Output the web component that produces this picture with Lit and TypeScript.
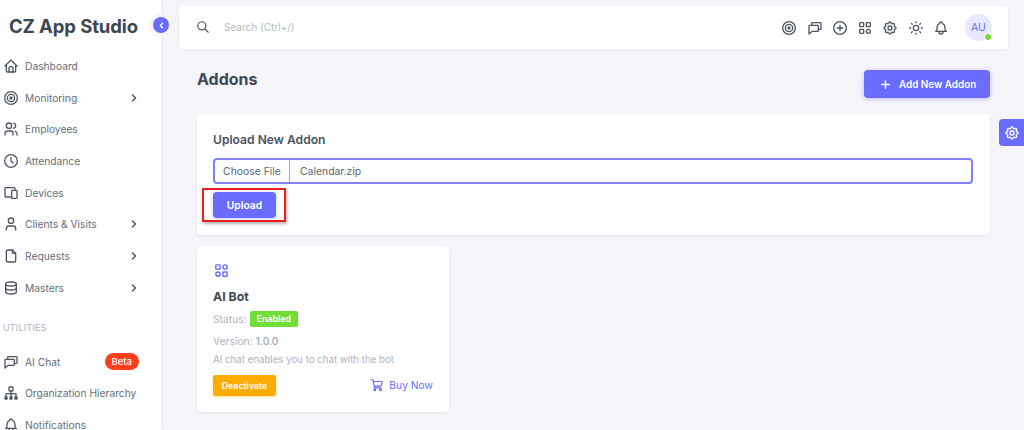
import { LitElement, html, css, svg } from "lit";
import { customElement } from "lit/decorators.js";

const ic = (body: unknown, size = 16, sw = 2) => html`<svg width=${size} height=${size} viewBox="0 0 24 24" fill="none" stroke="currentColor" stroke-width=${sw} stroke-linecap="round" stroke-linejoin="round">${body}</svg>`;

const I = {
  home: svg`<path d="M5 12H3l9-9 9 9h-2"/><path d="M5 12v7a2 2 0 0 0 2 2h10a2 2 0 0 0 2-2v-7"/><path d="M9 21v-6a2 2 0 0 1 2-2h2a2 2 0 0 1 2 2v6"/>`,
  target: svg`<circle cx="12" cy="12" r="1.5"/><circle cx="12" cy="12" r="5.500"/><circle cx="12" cy="12" r="9.500"/>`,
  users: svg`<circle cx="9" cy="7" r="4"/><path d="M3 21v-2a4 4 0 0 1 4-4h4a4 4 0 0 1 4 4v2"/><path d="M16 3.100a4 4 0 0 1 0 7.800"/><path d="M21 21v-2a4 4 0 0 0-3-3.900"/>`,
  clock: svg`<circle cx="12" cy="12" r="9.500"/><path d="M12 7v5l3 3"/>`,
  devices: svg`<path d="M13 9a1 1 0 0 1 1-1h6a1 1 0 0 1 1 1v10a1 1 0 0 1-1 1h-6a1 1 0 0 1-1-1z"/><path d="M18 8V5a1 1 0 0 0-1-1H4a1 1 0 0 0-1 1v12a1 1 0 0 0 1 1h9"/>`,
  user: svg`<circle cx="12" cy="7" r="4"/><path d="M5 21v-2a4 4 0 0 1 4-4h6a4 4 0 0 1 4 4v2"/>`,
  file: svg`<path d="M14 3v4a1 1 0 0 0 1 1h4"/><path d="M17 21H7a2 2 0 0 1-2-2V5a2 2 0 0 1 2-2h7l5 5v11a2 2 0 0 1-2 2z"/>`,
  db: svg`<ellipse cx="12" cy="6" rx="8" ry="3"/><path d="M4 6v6c0 1.700 3.600 3 8 3s8-1.300 8-3V6"/><path d="M4 12v6c0 1.700 3.600 3 8 3s8-1.300 8-3v-6"/>`,
  chat: svg`<path d="M7 7V5a1 1 0 0 1 1-1h12a1 1 0 0 1 1 1v8a1 1 0 0 1-1 1h-2"/><path d="M3 9a1 1 0 0 1 1-1h12a1 1 0 0 1 1 1v7a1 1 0 0 1-1 1H8l-5 4z"/>`,
  org: svg`<rect x="9" y="3" width="6" height="6" rx="1"/><path d="M12 9v8M4.500 17v-3a1 1 0 0 1 1-1h13a1 1 0 0 1 1 1v3"/><path d="M3 18h3v3H3zM10.500 18h3v3h-3zM18 18h3v3h-3z" fill="currentColor"/>`,
  bell: svg`<path d="M10 5a2 2 0 1 1 4 0 7 7 0 0 1 4 6v3a4 4 0 0 0 2 3H4a4 4 0 0 0 2-3v-3a7 7 0 0 1 4-6"/><path d="M9 17v1a3 3 0 0 0 6 0v-1"/>`,
  chev: svg`<path d="M9 6l6 6-6 6"/>`,
  search: svg`<circle cx="10" cy="10" r="7"/><path d="M21 21l-6-6"/>`,
  plusc: svg`<circle cx="12" cy="12" r="9.500"/><path d="M8 12h8M12 8v8"/>`,
  apps: svg`<rect x="4" y="4" width="6" height="6" rx="1"/><rect x="14" y="4" width="6" height="6" rx="1"/><rect x="4" y="14" width="6" height="6" rx="1"/><circle cx="17" cy="17" r="3"/>`,
  apps2: svg`<rect x="4" y="4" width="6" height="6" rx="1"/><circle cx="17" cy="7" r="3"/><circle cx="7" cy="17" r="3"/><rect x="14" y="14" width="6" height="6" rx="1"/>`,
  gear: svg`<path d="M10.325 4.317c.426-1.756 2.924-1.756 3.350 0a1.724 1.724 0 0 0 2.573 1.066c1.543-.94 3.310.826 2.370 2.370a1.724 1.724 0 0 0 1.065 2.572c1.756.426 1.756 2.924 0 3.350a1.724 1.724 0 0 0-1.066 2.573c.94 1.543-.826 3.310-2.370 2.370a1.724 1.724 0 0 0-2.572 1.065c-.426 1.756-2.924 1.756-3.350 0a1.724 1.724 0 0 0-2.573-1.066c-1.543.94-3.310-.826-2.370-2.370a1.724 1.724 0 0 0-1.065-2.572c-1.756-.426-1.756-2.924 0-3.350a1.724 1.724 0 0 0 1.066-2.573c-.94-1.543.826-3.310 2.370-2.370 1 .608 2.296.07 2.572-1.065z"/><circle cx="12" cy="12" r="3"/>`,
  sun: svg`<circle cx="12" cy="12" r="4"/><path d="M2.500 12h1.500M20 12h1.500M12 2.500V4M12 20v1.500M5.300 5.300l1 1M17.700 17.700l1 1M5.300 18.700l1-1M17.700 6.300l1-1"/>`,
  plus: svg`<path d="M12 5v14M5 12h14"/>`,
  cart: svg`<circle cx="8" cy="20" r="1.700"/><circle cx="18" cy="20" r="1.700"/><path d="M2 3h3l3 14h10"/><path d="M5.500 6H21l-2 8H7.200"/>`,
};

const nav = [
  ["Dashboard", I.home, false],
  ["Monitoring", I.target, true],
  ["Employees", I.users, false],
  ["Attendance", I.clock, false],
  ["Devices", I.devices, false],
  ["Clients & Visits", I.user, true],
  ["Requests", I.file, true],
  ["Masters", I.db, true],
] as const;

@customElement("app-root")
export class AppRoot extends LitElement {
  static styles = css`
    :host { display: block; width: 1024px; height: 430px; overflow: hidden; position: relative;
      font-family: Inter, "Open Sans", sans-serif; background: #f4f4f9; color: #5d6571; }
    .page { display: flex; height: 430px; }
    .side { width: 161px; flex: none; background: #fff; box-shadow: 0 0 4px rgba(70,70,100,.08); overflow: hidden; }
    .logo { height: 50px; box-sizing: border-box; padding: 1px 0 0 9px; display: flex; align-items: center; font-size: 18.500px; font-weight: 700; color: #3d4653; letter-spacing: -.1px; white-space: nowrap; }
    .items { display: flex; flex-direction: column; }
    .item { height: 31.700px; flex: none; display: flex; align-items: center; padding: 0 21px 0 3px; font-size: 10.250px; color: #656d78; gap: 6px; white-space: nowrap; }
    .item .ico { width: 16px; display: flex; justify-content: center; color: #4f5763; }
    .item .lbl { flex: 1; }
    .chev { display: flex; color: #4f5763; }
    .section { font-size: 8.800px; color: #aeb2b9; letter-spacing: .3px; padding: 18.400px 0 12px 3px; line-height: 12px; }
    .beta { background: #ff3e1d; color: #fff; font-size: 9.500px; font-weight: 500; border-radius: 9px; padding: 2px 7px; line-height: 13px; margin-right: 1px; }
    .toggle { position: absolute; left: 153px; top: 17px; width: 16px; height: 16px; border-radius: 50%; background: #696cff; color: #fff; display: flex; align-items: center; justify-content: center; box-shadow: 0 0 0 4px #f4f4f9; }
    .main { flex: 1; min-width: 0; padding: 6px 0 0 18px; }
    .navbar { width: 829px; height: 43px; box-sizing: border-box; background: #fff; border-radius: 4px; box-shadow: 0 1px 3px rgba(70,70,100,.08); display: flex; align-items: center; padding: 0 16px 0 17px; }
    .search-i { display: flex; color: #4f5763; margin-top: -2px; }
    .search-t { margin-left: 14px; font-size: 10px; color: #b4b8bf; flex: 1; margin-top: -2px; }
    .tools { display: flex; align-items: center; gap: 9.300px; color: #4f5763; margin-right: 1px; }
    .tools span { display: flex; }
    .avatar { margin-left: 15px; width: 27px; height: 27px; border-radius: 50%; background: #e7e7ff; color: #696cff; font-size: 10.500px; font-weight: 400; display: flex; align-items: center; justify-content: center; position: relative; }
    .dot { position: absolute; right: 1px; bottom: 1px; width: 6px; height: 6px; border-radius: 50%; background: #71dd37; box-shadow: 0 0 0 1px #fff; }
    .content { padding: 0 0 0 18px; width: 793px; }
    .head { display: flex; justify-content: space-between; align-items: center; margin-top: 21px; height: 28px; }
    h1 { margin: -11px 0 0; font-size: 16px; font-weight: 700; color: #3f4855; }
    .btn { background: #696cff; color: #fff; border-radius: 4px; font-weight: 600; box-shadow: 0 1px 4px rgba(105,108,255,.4); display: flex; align-items: center; }
    .add { height: 28px; width: 126px; font-size: 9.900px; padding: 0 0 0 15px; gap: 7px; box-sizing: border-box; }
    .card { background: #fff; border-radius: 4px; box-shadow: 0 1px 3px rgba(70,70,100,.08); }
    .upload { margin-top: 16px; height: 121px; box-sizing: border-box; padding: 18px 17px 0 16px; }
    h2 { margin: 0; font-size: 12.100px; font-weight: 600; color: #4a525e; line-height: 16px; }
    .file { margin-top: 10px; height: 26px; box-sizing: border-box; border: 2px solid #7f82ff; border-radius: 4px; display: flex; align-items: center; font-size: 10.400px; color: #5d6571; }
    .choose { width: 75px; height: 100%; display: flex; align-items: center; justify-content: center; border-right: 1px solid #9a9cff; box-sizing: border-box; }
    .fname { padding-left: 10px; }
    .up-wrap { margin-top: 8px; position: relative; }
    .up { width: 63px; height: 26px; justify-content: center; font-size: 10.300px; }
    .hl { position: absolute; left: -11px; top: -4px; width: 84px; height: 34px; box-sizing: border-box; border: 2px solid #e8201a; box-shadow: 1px 2px 3px rgba(0,0,0,.3); pointer-events: none; }
    .addon { margin-top: 11px; width: 252px; height: 166px; box-sizing: border-box; padding: 16px 16px 0; }
    .addon-i { display: flex; color: #696cff; height: 17px; }
    h3 { margin: 9px 0 0; font-size: 12.300px; font-weight: 700; color: #3f4855; line-height: 17px; }
    .row { font-size: 10.300px; color: #b0b4bb; line-height: 15px; display: flex; align-items: center; gap: 3px; }
    .row b { font-weight: 500; color: #a3a8b0; }
    .status { margin-top: 6px; }
    .en { background: #71dd37; color: #fff; font-size: 8.800px; font-weight: 600; border-radius: 2px; padding: 0 7px; line-height: 16px; height: 16px; }
    .ver { margin-top: 7px; }
    .desc { margin-top: 3px; font-size: 9.700px; white-space: nowrap; }
    .actions { margin-top: 8px; display: flex; align-items: center; justify-content: space-between; }
    .deact { background: #ffab00; color: #fff; border-radius: 2.500px; font-size: 8.800px; font-weight: 600; width: 63px; height: 21px; display: flex; align-items: center; justify-content: center; box-shadow: 0 1px 3px rgba(255,171,0,.4); }
    .buy { color: #696cff; font-size: 10.300px; display: flex; align-items: center; gap: 5px; margin-top: -1px; }
    .fab { position: absolute; right: 0; top: 119px; width: 25px; height: 27px; background: #696cff; color: #fff; border-radius: 4px 0 0 4px; display: flex; align-items: center; justify-content: center; }
  `;

  render() {
    return html`<div class="page">
      <aside class="side">
        <div class="logo">CZ App Studio</div>
        <div class="items">
          ${nav.map(([t, i, c]) => html`<div class="item"><span class="ico">${ic(i, 16)}</span><span class="lbl">${t}</span>${c ? html`<span class="chev">${ic(I.chev, 12, 3)}</span>` : ""}</div>`)}
        </div>
        <div class="section">UTILITIES</div>
        <div class="items">
          <div class="item"><span class="ico">${ic(I.chat, 16)}</span><span class="lbl">AI Chat</span><span class="beta">Beta</span></div>
          <div class="item"><span class="ico">${ic(I.org, 16)}</span><span class="lbl">Organization Hierarchy</span></div>
          <div class="item"><span class="ico">${ic(I.bell, 16)}</span><span class="lbl">Notifications</span></div>
        </div>
      </aside>
      <main class="main">
        <div class="navbar">
          <span class="search-i">${ic(I.search, 14)}</span>
          <span class="search-t">Search (Ctrl+/)</span>
          <div class="tools">
            <span>${ic(I.target, 16)}</span><span>${ic(I.chat, 16)}</span><span>${ic(I.plusc, 16)}</span><span>${ic(I.apps, 16)}</span><span>${ic(I.gear, 16)}</span><span>${ic(I.sun, 16)}</span><span>${ic(I.bell, 16)}</span>
          </div>
          <div class="avatar">AU<span class="dot"></span></div>
        </div>
        <div class="content">
          <div class="head">
            <h1>Addons</h1>
            <div class="btn add">${ic(I.plus, 13, 2.500)}<span>Add New Addon</span></div>
          </div>
          <section class="card upload">
            <h2>Upload New Addon</h2>
            <div class="file"><span class="choose">Choose File</span><span class="fname">Calendar.zip</span></div>
            <div class="up-wrap"><div class="btn up">Upload</div><div class="hl"></div></div>
          </section>
          <section class="card addon">
            <div class="addon-i">${ic(I.apps2, 17)}</div>
            <h3>AI Bot</h3>
            <div class="row status"><span>Status:</span><span class="en">Enabled</span></div>
            <div class="row ver"><span>Version: <b>1.0.0</b></span></div>
            <div class="row desc"><span>AI chat enables you to chat with the bot</span></div>
            <div class="actions"><span class="deact">Deactivate</span><span class="buy">${ic(I.cart, 14, 2)}Buy Now</span></div>
          </section>
        </div>
      </main>
    </div>
    <div class="toggle">${ic(svg`<path d="M15 6l-6 6 6 6"/>`, 9, 3.500)}</div>
    <div class="fab">${ic(I.gear, 16)}</div>`;
  }
}
